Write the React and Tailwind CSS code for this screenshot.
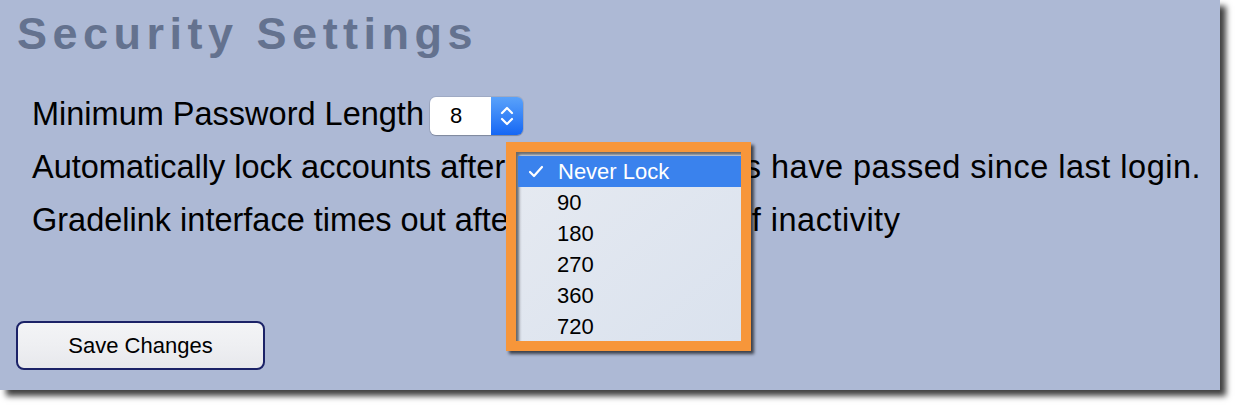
import React from 'react'

function Chevrons() {
  return (
    <svg width="14" height="22" viewBox="0 0 14 22" fill="none" stroke="white" strokeWidth="2.2" strokeLinecap="round" strokeLinejoin="round">
      <polyline points="2,8 7,3 12,8" />
      <polyline points="2,14 7,19 12,14" />
    </svg>
  )
}

function NumberSelect({ value, width = 93, textWidth = 61 }) {
  return (
    <span
      className="inline-flex align-middle h-[38px] rounded-[6px] overflow-hidden tracking-normal shadow-[0_0_0_1px_rgba(0,0,0,0.08),0_1px_1px_rgba(0,0,0,0.2)]"
      style={{ width }}
    >
      <span className="flex items-center bg-white pl-[20px] text-[22px] leading-none" style={{ width: textWidth }}>
        {value}
      </span>
      <span className="flex flex-1 items-center justify-center bg-gradient-to-b from-[#5aa2fa] to-[#1466f4]">
        <Chevrons />
      </span>
    </span>
  )
}

const options = ['90', '180', '270', '360', '720']

export default function App() {
  return (
    <div className="w-[1240px] h-[410px] bg-white font-['Liberation_Sans',Arial,sans-serif]">
      <div className="relative w-[1220px] h-[390px] bg-[#adb9d5] shadow-[6px_6px_6px_rgba(0,0,0,0.75)]">
        <h1 className="ml-[17px] pt-[11px] text-[45px] leading-[45px] font-bold tracking-[5.5px] text-[#64728f]">
          Security Settings
        </h1>

        <div className="ml-[32px] mt-[32px] text-[32.5px] leading-[53px] text-black whitespace-nowrap">
          <p>
            Minimum Password Length<span className="inline-block w-[6px]" /><NumberSelect value="8" />
          </p>
          <p>
            Automatically lock accounts after <NumberSelect value="Never Lock" width={167} textWidth={135} />
            <span className="tracking-[0.5px]"> days have passed since last login.</span>
          </p>
          <p>
            Gradelink interface times out after <NumberSelect value="15" width={68} textWidth={36} />
            <span className="tracking-[0.5px]"> minutes of inactivity</span>
          </p>
        </div>

        <button className="ml-[16px] mt-[74px] w-[249px] h-[49px] rounded-[8px] border-2 border-[#1b2267] bg-gradient-to-b from-[#f3f4f6] via-[#eeeff2] to-[#e7e8ec] text-[22px] text-black">
          Save Changes
        </button>

        {/* open dropdown, highlighted with an orange annotation frame */}
        <div className="absolute left-[506px] top-[142px] w-[245px] h-[209px] border-[10px] border-[#f7963a] shadow-[3px_3px_3px_rgba(0,0,0,0.65)]">
          <div className="h-full pt-[4px] bg-gradient-to-br from-[#e6eaf1] to-[#dae2ee] shadow-[inset_3px_3px_3px_rgba(0,0,0,0.55)] text-[22px] leading-[31px] text-black">
            <div className="flex items-center h-[31px] ml-[2px] bg-[#3a82ed] text-white">
              <svg className="ml-[10px] mr-[14px]" width="16" height="13" viewBox="0 0 16 13" fill="none" stroke="white" strokeWidth="2.2" strokeLinecap="round" strokeLinejoin="round">
                <polyline points="2,7 6,11 14,2" />
              </svg>
              <span>Never Lock</span>
            </div>
            {options.map((o) => (
              <div key={o} className="h-[31px] pl-[41px]">
                {o}
              </div>
            ))}
          </div>
        </div>
      </div>
    </div>
  )
}
